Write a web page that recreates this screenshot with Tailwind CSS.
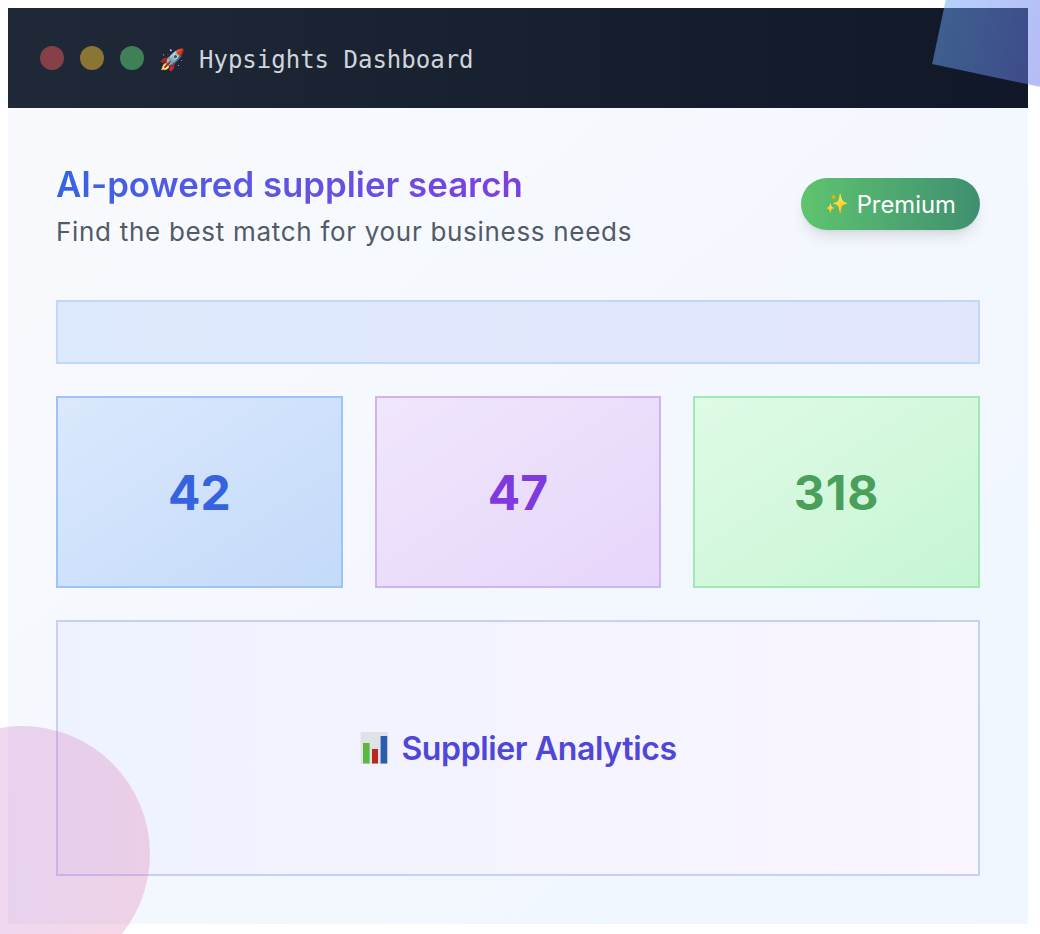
<!DOCTYPE html>
<html class="overflow-hidden">
<head>
<meta charset="utf-8">
<script src="https://cdn.jsdelivr.net/npm/@tailwindcss/browser@4"></script>
</head>
<body class="bg-white font-['Inter','Noto_Color_Emoji',sans-serif] overflow-hidden h-screen">
<div class="relative ml-2 mt-2 w-[1020px] h-[916px] bg-linear-to-br from-[#f9fafd] to-[#eff6ff]">
  <header class="h-[100px] px-8 flex items-center gap-4 bg-linear-to-r from-[#1f2937] to-[#111827]">
    <span class="w-6 h-6 rounded-full bg-[#864048]"></span>
    <span class="w-6 h-6 rounded-full bg-[#8a7535]"></span>
    <span class="w-6 h-6 rounded-full bg-[#408058]"></span>
    <span class="flex items-center font-['DejaVu_Sans_Mono',monospace] text-2xl text-[#d1d5db] pt-[3px]"><span class="text-[21px] w-6 -ml-px font-['Noto_Color_Emoji']">🚀</span><span class="ml-4">Hypsights Dashboard</span></span>
  </header>
  <main class="p-12 flex flex-col gap-8">
    <div class="flex items-center justify-between h-24 mb-4">
      <div>
        <h1 class="text-[34.8px] leading-[56px] font-[570] bg-linear-to-r from-[#3563e4] to-[#7c3fe0] bg-clip-text text-transparent w-fit">AI-powered supplier search</h1>
        <p class="text-[26px] leading-10 tracking-[0.7px] text-[#525a68]">Find the best match for your business needs</p>
      </div>
      <div class="w-[179px] h-[52px] pl-6 rounded-full bg-linear-to-r from-[#5fc46e] to-[#3f8f70] text-white text-[23.8px] leading-7 shadow-lg flex items-center gap-2"><span class="text-[19px] font-['Noto_Color_Emoji']">✨</span><span class="pt-0.5">Premium</span></div>
    </div>
    <div class="h-16 border-2 border-[#c0d9fb] bg-linear-to-r from-[#dde9fc] to-[#e2e6fc]"></div>
    <div class="grid grid-cols-3 gap-8">
      <div class="h-48 pt-0.5 border-2 border-[#9cc3fa] bg-linear-to-br from-[#dbe8fd] to-[#c3daf9] flex items-center justify-center text-5xl font-bold text-[#3563e0]">42</div>
      <div class="h-48 pt-0.5 border-2 border-[#cfb4f3] bg-linear-to-br from-[#f0e6fc] to-[#e6d6fb] flex items-center justify-center text-5xl font-bold text-[#7f3adf]">47</div>
      <div class="h-48 pt-0.5 border-2 border-[#a0e8b4] bg-linear-to-br from-[#dffbe5] to-[#c6f5d4] flex items-center justify-center text-5xl font-bold text-[#4a9f5a] tracking-[1px]">318</div>
    </div>
    <div class="h-64 pt-0.5 border-2 border-[#c9d0f8] bg-linear-to-r from-[#eef2ff] to-[#faf5ff] flex items-center justify-center text-[32px] font-[570] tracking-[-0.37px] text-[#5046d8] gap-3">
      <svg class="w-[30px] h-8 -mt-0.5" viewBox="0 0 30 32" aria-hidden="true">
        <rect x="1.6" y="0" width="27.4" height="32" fill="#dfe3e8"/>
        <rect x="4" y="11" width="6.6" height="20.5" fill="#5cb83c"/>
        <rect x="13" y="17" width="6" height="14.5" fill="#b8281e"/>
        <rect x="21.6" y="4" width="6.6" height="27.5" fill="#2a5cb0"/>
      </svg>
      <span>Supplier Analytics</span>
    </div>
  </main>
  <div class="absolute left-[-114px] top-[718px] w-64 h-64 rounded-full bg-linear-to-r from-[#a85cdc]/25 to-[#e0609a]/25"></div>
  <div class="absolute left-[942px] top-[-114px] w-48 h-48 rotate-12 bg-linear-to-r from-[#6aa5f5]/50 to-[#6a55e5]/50"></div>
</div>
</body>
</html>
